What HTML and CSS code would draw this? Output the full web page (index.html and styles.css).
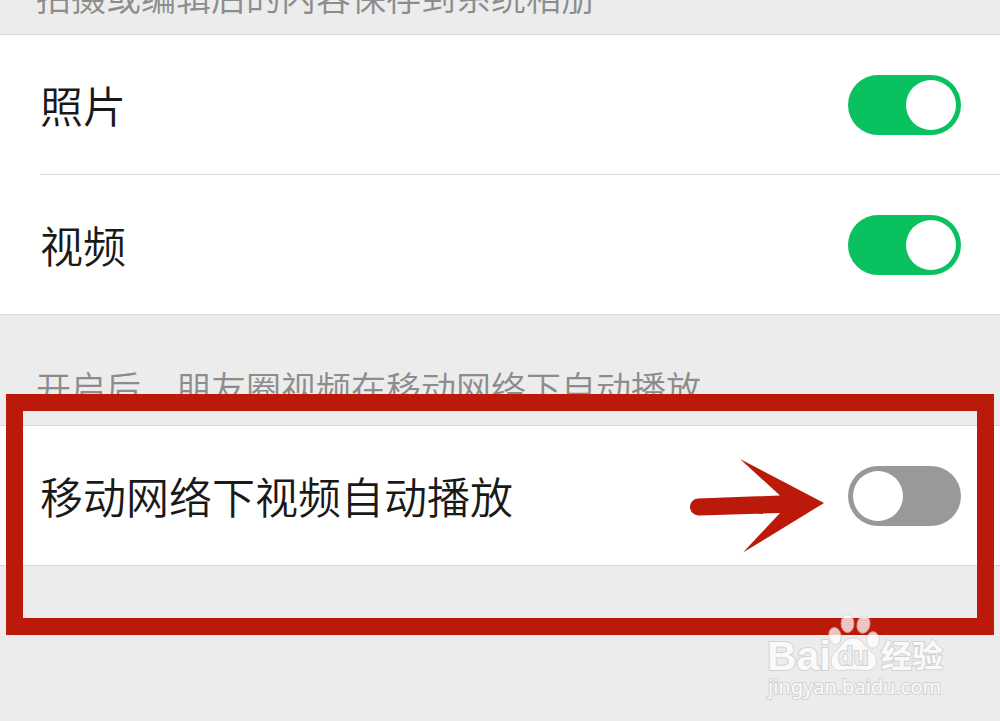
FILE: index.html
```html
<!DOCTYPE html>
<html lang="zh-CN">
<head>
<meta charset="utf-8">
<meta name="viewport" content="width=device-width, initial-scale=1">
<title>设置</title>
<link rel="stylesheet" href="styles.css">
</head>
<body>
<main class="settings">
  <section>
    <p class="caption caption-first">拍摄或编辑后的内容保存到系统相册</p>
    <div class="group">
      <div class="row">
        <label class="label" for="photo">照片</label>
        <input class="switch" type="checkbox" id="photo" checked>
      </div>
      <div class="row">
        <label class="label" for="video">视频</label>
        <input class="switch" type="checkbox" id="video" checked>
      </div>
    </div>
  </section>
  <section>
    <p class="caption caption-second">开启后，朋友圈视频在移动网络下自动播放</p>
    <div class="group">
      <div class="row">
        <label class="label" for="autoplay">移动网络下视频自动播放</label>
        <input class="switch" type="checkbox" id="autoplay">
      </div>
    </div>
  </section>
  <div class="highlight"></div>
  <svg class="arrow" width="136" height="96" viewBox="0 0 136 96" aria-hidden="true">
    <path d="M9 40.500L91 37.500L51 1L135 45L54 94.500L91 55L10 57.500A8.500 8.500 0 0 1 9 40.500Z"/>
  </svg>
  <svg class="watermark" width="240" height="94" viewBox="0 0 240 94">
    <g class="mark">
      <ellipse cx="85" cy="25" rx="6" ry="8.500" transform="rotate(-12 85 25)"/>
      <ellipse cx="97.500" cy="12.500" rx="6.400" ry="9"/>
      <ellipse cx="113.500" cy="13.500" rx="6.400" ry="8.700" transform="rotate(12 113.500 13.500)"/>
      <ellipse cx="123" cy="29" rx="6.400" ry="8.300"/>
      <path d="M103 27C109 27 112 30 115 34.500C119 40 126.500 43 126.500 50C126.500 57 120 60.500 114 59.500C107 58.500 99 58.500 92 59.500C86 60.500 81 57 81 50C81 43 87 40 91 34.500C94 30 97 27 103 27Z"/>
    </g>
    <g class="words">
      <text class="brand" x="17" y="59">Bai</text>
      <text class="du" x="88" y="54">du</text>
      <text class="hanzi" x="131" y="56">经验</text>
      <text class="url" x="18" y="83">jingyan.baidu.com</text>
    </g>
  </svg>
</main>
</body>
</html>
```
FILE: styles.css
```css
* {
  box-sizing: border-box;
}

body {
  margin: 0;
  background: #ececec;
  color: #191919;
  font-family: "Noto Sans CJK SC", sans-serif;
  font-weight: 350;
}

.settings {
  position: relative;
  min-height: 100vh;
  overflow: hidden;
}

.caption {
  display: flex;
  align-items: flex-end;
  margin: 0;
  padding: 0 36px 18px;
  overflow: hidden;
  color: #8c8c8c;
  font-size: 35px;
  line-height: 40px;
  white-space: nowrap;
}

.caption-first {
  height: 34px;
}

.caption-second {
  height: 110px;
}

.group {
  background: #fff;
  border-top: 1px solid #d9d9d9;
  border-bottom: 1px solid #d9d9d9;
}

.row {
  display: flex;
  align-items: center;
  justify-content: space-between;
  height: 139px;
  margin-left: 40px;
  padding-right: 39px;
}

.row + .row {
  height: 140px;
  border-top: 1px solid #d9d9d9;
}

.label {
  padding-bottom: 2px;
  font-size: 43px;
  line-height: 60px;
}

.switch {
  appearance: none;
  width: 113px;
  height: 60px;
  margin: 0;
  padding: 5px;
  border-radius: 30px;
  background: #999;
}

.switch::before {
  content: "";
  display: block;
  width: 50px;
  height: 50px;
  border-radius: 50%;
  background: #fff;
}

.switch:checked {
  background: #0ac160;
}

.switch:checked::before {
  margin-left: auto;
}

.highlight {
  position: absolute;
  top: 394px;
  left: 6px;
  right: 6px;
  height: 241px;
  border: 17px solid #bb190a;
  pointer-events: none;
}

.arrow {
  position: absolute;
  top: 458px;
  right: 175px;
  fill: #bb190a;
  pointer-events: none;
}

.watermark {
  position: absolute;
  top: 611px;
  right: 10px;
  pointer-events: none;
}

.mark {
  fill: #fff;
  stroke: #d2d2d2;
  stroke-width: 1px;
  opacity: 0.75;
}

.words {
  fill: #fafafa;
  stroke: #d2d2d2;
  stroke-width: 2px;
  paint-order: stroke;
}

.brand {
  font: bold 41px "Liberation Sans", sans-serif;
}

.du {
  fill: #ececec;
  font: bold 25px "Liberation Sans", sans-serif;
}

.hanzi {
  font: bold 31px "Noto Sans CJK SC", sans-serif;
}

.url {
  font: 20px "Noto Sans", sans-serif;
}
```
